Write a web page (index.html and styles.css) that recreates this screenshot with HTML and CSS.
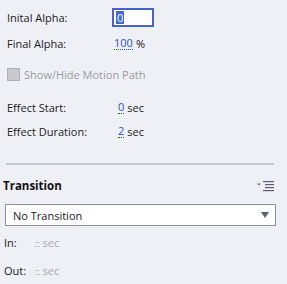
FILE: index.html
```html
<!DOCTYPE html>
<html>
<head><meta charset="utf-8"><link rel="stylesheet" href="styles.css"></head>
<body>
<div class="panel">
  <div class="props">
    <div class="row r1">
      <span class="label">Inital Alpha:</span>
      <span class="input"><span class="sel">0</span></span>
    </div>
    <div class="row r2">
      <span class="label">Final Alpha:</span>
      <span class="val v100">100</span><span class="unit">%</span>
    </div>
    <div class="row r3">
      <span class="check"></span><span class="dis">Show/Hide Motion Path</span>
    </div>
    <div class="row r4">
      <span class="label">Effect Start:</span>
      <span class="val v1">0</span><span class="unit">sec</span>
    </div>
    <div class="row r5">
      <span class="label">Effect Duration:</span>
      <span class="val v1">2</span><span class="unit">sec</span>
    </div>
  </div>
  <div class="divider"></div>
  <div class="head">
    <span class="title">Transition</span>
    <svg class="menu" width="20" height="12" viewBox="0 0 20 12">
      <path d="M1 3.5h4l-2 2z" fill="#6a6a80"/>
      <rect x="7" y="1" width="11" height="1.2" fill="#5a5a72"/>
      <rect x="9" y="4" width="9" height="1.2" fill="#5a5a72"/>
      <rect x="9" y="7" width="9" height="1.2" fill="#5a5a72"/>
      <rect x="7" y="10" width="11" height="1.2" fill="#5a5a72"/>
    </svg>
  </div>
  <div class="select">
    <span>No Transition</span>
    <span class="arrow"></span>
  </div>
  <div class="row r6">
    <span class="lab2">In:</span><span class="dval">–</span><span class="dunit">sec</span>
  </div>
  <div class="row r7">
    <span class="lab2">Out:</span><span class="dval">–</span><span class="dunit">sec</span>
  </div>
</div>
</body>
</html>
```
FILE: styles.css
```css
html, body { margin: 0; padding: 0; }
body {
  background: #eff0f5;
  font-family: "Open Sans", "Noto Sans", sans-serif;
  font-size: 11px;
  color: #1a1a1a;
  width: 287px;
  height: 284px;
  overflow: hidden;
}
.panel { padding: 0; }
.props { padding-left: 7px; }
.row { display: flex; align-items: center; height: 14px; }
.label { width: 105px; }
.r1 { margin-top: 10px; }
.r2 { margin-top: 12px; }
.r3 { margin-top: 17px; }
.r4 { margin-top: 19px; }
.r5 { margin-top: 10px; }
.input {
  width: 36px;
  height: 15px;
  border: 2px solid #4a62c8;
  background: #fff;
  display: flex;
  align-items: center;
  padding-left: 2px;
  box-sizing: content-box;
  margin-top: 1px;
}
.sel { background: #3e6ae0; color: #fff; line-height: 13px; padding: 0 1px; }
.val {
  color: #2753c8;
  border-bottom: 1px dotted #2753c8;
  line-height: 12px;
}
.v100 { margin-left: 2px; }
.v1 { margin-left: 6px; }
.unit { margin-left: 3px; }
.check {
  width: 11px; height: 11px;
  background: #c9c9cc;
  border: 1px solid #aeaeb3;
  margin-right: 4px;
}
.dis { color: #9a9aa2; }
.divider {
  height: 2px;
  background: #c6c7d0;
  margin: 25px 13px 0 6px;
}
.head {
  display: flex;
  justify-content: space-between;
  align-items: center;
  margin: 13px 11px 0 3px;
}
.title { font-weight: bold; font-size: 11.5px; color: #111; }
.select {
  margin: 11px 11px 0 5px;
  height: 22px;
  border: 1px solid #8e90a6;
  background: #fff;
  display: flex;
  align-items: center;
  justify-content: space-between;
  padding: 0 6px 0 7px;
  box-sizing: border-box;
}
.arrow {
  width: 0; height: 0;
  border-left: 4px solid transparent;
  border-right: 4px solid transparent;
  border-top: 6px solid #5e6076;
}
.r6 { margin-top: 9px; padding-left: 4px; }
.r7 { margin-top: 14px; padding-left: 4px; }
.lab2 { width: 31px; }
.dval { color: #b0b0b8; border-bottom: 1px dotted #b0b0b8; font-size: 9px; line-height: 9px; }
.dunit { color: #a8a8b0; margin-left: 3px; }
```
